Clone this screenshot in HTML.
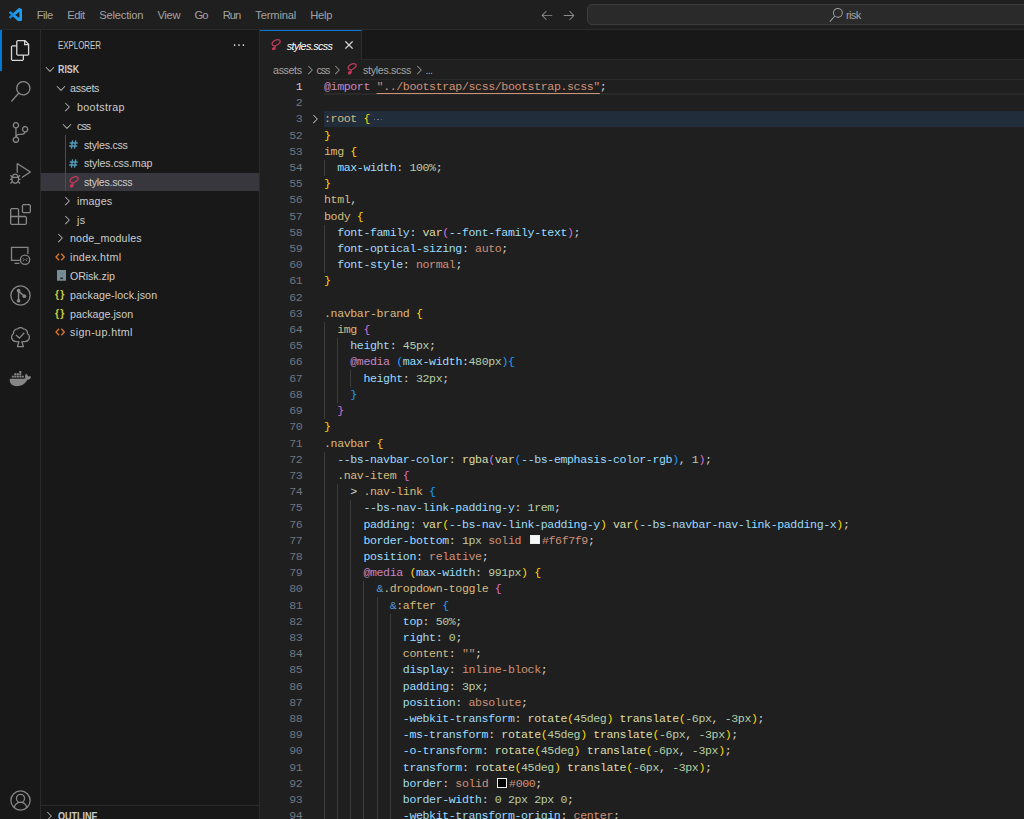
<!DOCTYPE html>
<html><head><meta charset="utf-8">
<style>
*{box-sizing:border-box;margin:0;padding:0}
html,body{width:1024px;height:819px;overflow:hidden;background:#181818}
body{position:relative;font-family:"Liberation Sans",sans-serif;color:#ccc;font-size:11px}
.abs{position:absolute}
#title{position:absolute;left:0;top:0;width:1024px;height:30px;background:#1f1f1f;border-bottom:1px solid #2b2b2b}
.menu{position:absolute;top:8px;font-size:11.2px;line-height:14px;color:#a2a2a2;white-space:nowrap}
#search{position:absolute;left:587px;top:4px;width:460px;height:20.600px;background:#2a2a2a;border:1px solid #3d3d3d;border-radius:5px}
#act{position:absolute;left:0;top:30px;width:41px;height:789px;background:#181818;border-right:1px solid #2b2b2b}
#side{position:absolute;left:41px;top:30px;width:218px;height:789px;background:#181818}
#sideb{z-index:5;position:absolute;left:258.6px;top:30px;width:1px;height:789px;background:#2b2b2b}
#tabs{position:absolute;left:260px;top:30px;width:764px;height:30px;background:#181818;border-bottom:1px solid #2b2b2b}
#tab{position:absolute;left:259.4px;top:30px;width:102.2px;height:30px;background:#1f1f1f;border-top:1px solid #0078d4;border-right:1px solid #2b2b2b}
#ed{position:absolute;left:260px;top:60px;width:764px;height:759px;background:#1f1f1f}
.row{margin-top:.5px;position:absolute;left:41px;width:218px;height:18.77px;font-size:11.1px;line-height:18.77px;color:#ccc;white-space:nowrap}
.row span{position:absolute;top:0}
.ic{position:absolute;fill:#c5c5c5}
.ai{position:absolute;fill:#868686}
.ln{position:absolute;left:262px;width:40.39px;text-align:right;font-family:"Liberation Mono",monospace;font-size:11.6px;letter-spacing:-0.39px;line-height:16.21px;height:16.21px;padding-top:0.2px;color:#6e7681;white-space:pre}
.ln.act{color:#ccc}
.cl{position:absolute;left:324px;font-family:"Liberation Mono",monospace;font-size:11.6px;letter-spacing:-0.39px;line-height:16.21px;height:16.21px;padding-top:0.2px;color:#d4d4d4;white-space:pre;overflow:visible}
.cl.fl{width:700px;background:#212d3a}
.ig{position:absolute;width:1px;height:16.21px;background:#3c3c3c}
.su{text-decoration:underline;text-decoration-color:#ce9178;text-underline-offset:2.6px;text-decoration-thickness:1px}
.fold{display:inline-block;position:relative;width:12px;height:8px}
.fold i{position:absolute;top:4.6px;width:1.6px;height:1.6px;border-radius:1px;background:#7d838b}
.cb{display:inline-block;width:14.3px;height:1px;position:relative;vertical-align:top;letter-spacing:0}
.cb b{position:absolute;left:2.3px;top:2.1px;width:9.7px;height:9.6px;border:1.2px solid #eee;display:block}
.bc{position:absolute;top:62.6px;font-size:10.7px;line-height:14px;color:#a3a3a3;white-space:nowrap}
</style></head><body>

<!-- TITLE BAR -->
<div id="title">
<svg class="abs" style="left:8.5px;top:7.5px" width="13.8" height="13.8" viewBox="0 0 100 100">
<path fill="#1f9cf0" d="M96.46 10.8 75.86.88a6.23 6.23 0 0 0-7.11 1.2L29.3 38.05 12.12 25.01a4.16 4.16 0 0 0-5.32.24l-5.51 5.01a4.17 4.17 0 0 0 0 6.17L16.19 50 1.28 63.58a4.17 4.17 0 0 0 0 6.16l5.52 5.02a4.16 4.16 0 0 0 5.32.23L29.3 61.95l39.45 35.97a6.22 6.22 0 0 0 7.1 1.2l20.62-9.91a6.25 6.25 0 0 0 3.54-5.64V16.43a6.25 6.25 0 0 0-3.55-5.63ZM75.02 72.7 45.09 50l29.93-22.7v45.4Z"/>
<path fill="#0b7fd6" d="M29.3 38.05 12.12 25.01a4.16 4.16 0 0 0-5.32.24l-5.51 5.01a4.17 4.17 0 0 0 0 6.17L16.19 50 1.28 63.58a4.17 4.17 0 0 0 0 6.16l5.52 5.02a4.16 4.16 0 0 0 5.32.23L29.3 61.95 45.09 50Z" opacity=".55"/>
</svg>
<div class="menu" style="left:36.7px;font-size:11.2px;letter-spacing:-0.477px">File</div>
<div class="menu" style="left:67.2px;font-size:11.2px;letter-spacing:-0.427px">Edit</div>
<div class="menu" style="left:99.3px;font-size:11.2px;letter-spacing:-0.216px">Selection</div>
<div class="menu" style="left:157.4px;font-size:11.2px;letter-spacing:-0.282px">View</div>
<div class="menu" style="left:194.5px;font-size:11.2px;letter-spacing:-0.938px">Go</div>
<div class="menu" style="left:222.8px;font-size:11.2px;letter-spacing:-1.066px">Run</div>
<div class="menu" style="left:255.3px;font-size:11.2px;letter-spacing:-0.183px">Terminal</div>
<div class="menu" style="left:310.2px;font-size:11.2px;letter-spacing:-0.239px">Help</div>
<svg class="abs" style="left:540px;top:8px;fill:#919191" width="14" height="14" viewBox="0 0 16 16"><path d="M7 3.093l-5 5V8.8l5 5 .707-.707-4.146-4.147H14v-1H3.56L7.707 3.8 7 3.093z"/></svg>
<svg class="abs" style="left:562.3px;top:8px;fill:#8a8a8a" width="14" height="14" viewBox="0 0 16 16"><path d="M9 13.887l5-5V8.18l-5-5-.707.707 4.146 4.147H2v1h10.44L8.293 13.18l.707.707z"/></svg>
<div id="search"></div>
<svg class="abs" style="left:829px;top:7.6px;fill:#a8a8a8" width="14" height="14" viewBox="0 0 16 16"><path d="M15.25 0a8.25 8.25 0 0 0-6.18 13.72L1 22.88l1.12 1 8.05-9.12A8.251 8.251 0 1 0 15.25.01V0zm0 15a6.75 6.75 0 1 1 0-13.5 6.75 6.75 0 0 1 0 13.5z" transform="scale(.6667)"/></svg>
<div class="menu" style="left:846px;font-size:11.2px;letter-spacing:-0.669px">risk</div>
</div>

<!-- ACTIVITY BAR -->
<div id="act"></div>
<div class="abs" style="left:0;top:30px;width:2px;height:41px;background:#0078d4"></div>
<svg class="ai" style="left:10px;top:40px;fill:#d7d7d7" width="21" height="21" viewBox="0 0 24 24"><path d="M17.5 0h-9L7 1.5V6H2.5L1 7.5v15.07L2.5 24h12.07L16 22.57V18h4.7l1.3-1.43V4.5L17.5 0zm0 2.12l2.38 2.38H17.5V2.12zm-3 20.38h-12v-15H7v9.07L8.5 18h6v4.5zm6-6h-12v-15H16V6h4.5v10.5z"/></svg>
<svg class="ai" style="left:10px;top:81px" width="21" height="21" viewBox="0 0 24 24"><path d="M15.25 0a8.25 8.25 0 0 0-6.18 13.72L1 22.88l1.12 1 8.05-9.12A8.251 8.251 0 1 0 15.25.01V0zm0 15a6.75 6.75 0 1 1 0-13.5 6.75 6.75 0 0 1 0 13.5z"/></svg>
<svg class="ai" style="left:10px;top:122px" width="21" height="21" viewBox="0 0 24 24"><path d="M21.007 8.222A3.738 3.738 0 0 0 15.045 5.2a3.737 3.737 0 0 0 1.156 6.583 2.988 2.988 0 0 1-2.668 1.67h-2.99a4.456 4.456 0 0 0-2.989 1.165V7.4a3.737 3.737 0 1 0-1.494 0v9.117a3.776 3.776 0 1 0 1.816.099 2.99 2.99 0 0 1 2.668-1.667h2.99a4.484 4.484 0 0 0 4.223-3.039 3.736 3.736 0 0 0 3.25-3.687zM4.565 3.738a2.242 2.242 0 1 1 4.484 0 2.242 2.242 0 0 1-4.484 0zm4.484 16.441a2.242 2.242 0 1 1-4.484 0 2.242 2.242 0 0 1 4.484 0zm8.221-9.715a2.242 2.242 0 1 1 0-4.485 2.242 2.242 0 0 1 0 4.485z"/></svg>
<svg class="ai" style="left:10px;top:163px" width="21" height="21" viewBox="0 0 24 24"><path d="M10.94 13.5l-1.32 1.32a3.73 3.73 0 0 0-7.24 0L1.06 13.5 0 14.56l1.72 1.72-.22.22V18H0v1.5h1.5v.08c.077.489.214.966.41 1.42L0 22.94 1.06 24l1.65-1.65A4.308 4.308 0 0 0 6 24a4.31 4.31 0 0 0 3.29-1.65L10.94 24 12 22.94 10.09 21c.198-.464.336-.951.41-1.45v-.1H12V18h-1.5v-1.5l-.22-.22L12 14.56l-1.06-1.06zM6 13.5a2.25 2.25 0 0 1 2.25 2.25h-4.5A2.25 2.25 0 0 1 6 13.5zm3 6a3.33 3.33 0 0 1-3 3 3.33 3.33 0 0 1-3-3v-2.25h6v2.25zm14.76-9.9v1.26L13.5 17.37V15.6l8.5-5.37L9 2v9.46a5.07 5.07 0 0 0-1.5-.72V.63L8.64 0l15.12 9.6z"/></svg>
<svg class="ai" style="left:10px;top:204px" width="21" height="21" viewBox="0 0 24 24"><path d="M13.5 1.5L15 0h7.5L24 1.5V9l-1.5 1.5H15L13.5 9V1.5zm1.5 0V9h7.5V1.5H15zM0 15V6l1.5-1.5H9L10.5 6v7.5H18l1.5 1.5v7.5L18 24H1.5L0 22.5V15zm9-1.5V6H1.5v7.5H9zM9 15H1.5v7.5H9V15zm1.5 7.5H18V15h-7.5v7.5z"/></svg>
<!-- remote explorer -->
<svg class="ai" style="left:10px;top:245px;fill:none;stroke:#868686;stroke-width:1.5" width="21" height="21" viewBox="0 0 24 24"><path d="M11.200 17.500H1.750V2.800h18.700v7.400"/><path d="M5.200 21h5.600"/><circle cx="17.200" cy="16.800" r="5.300"/><path d="M14.700 15.100l1.600 1.700-1.600 1.700M19.700 15.100l-1.600 1.700 1.600 1.700" stroke-width="1.100"/></svg>
<!-- git graph -->
<svg class="ai" style="left:10px;top:285.4px;fill:none;stroke:#868686;stroke-width:1.5" width="21" height="21" viewBox="0 0 24 24"><circle cx="12" cy="12" r="11"/><circle cx="9.800" cy="6.300" r="2.100" fill="#868686" stroke="none"/><circle cx="9.800" cy="18" r="2.100" fill="#868686" stroke="none"/><circle cx="16.400" cy="12.800" r="2.100" fill="#868686" stroke="none"/><path d="M9.800 6.300v11.700M9.800 7 16.400 12.800" stroke-width="1.700"/></svg>
<!-- testing tree -->
<svg class="ai" style="left:10px;top:327px;fill:none;stroke:#868686;stroke-width:1.300;stroke-linejoin:round" width="21" height="21" viewBox="0 0 21 21"><path d="M8.900 14.700H6.200a4.500 4.500 0 0 1-2.600-8.200 4 4 0 0 1 4.100-4.600 3.600 3.600 0 0 1 5.600 0 4 4 0 0 1 4.100 4.600 4.500 4.500 0 0 1-2.600 8.200h-2.900l1.500 5H7.400z"/><path d="m5.900 8.100 3.500 3 4.900-5.400"/></svg>
<!-- docker -->
<svg class="ai" style="left:9.300px;top:368.2px" width="22.300" height="19.600" viewBox="0 0 24 22" preserveAspectRatio="none"><path d="M23.5 9.800c-.6-.4-1.900-.5-2.900-.3-.1-1-.7-1.900-1.700-2.700l-.6-.4-.4.600c-.5.800-.7 2.100-.6 3 .1.500.2 1.100.600 1.600-.800.4-2 .500-2.300.500H.9c-.3 1.900 0 4.300 1.400 6 1.300 1.500 3.200 2.300 5.800 2.300 5.500 0 9.600-2.600 11.500-7.200 1 0 2.700 0 3.600-1.700l.3-.600z"/><path d="M3 8.600h2.200v2.200H3zM5.700 8.600h2.200v2.200H5.700zM8.400 8.600h2.200v2.200H8.400zM11.100 8.600h2.200v2.200h-2.200zM13.800 8.600H16v2.200h-2.200zM5.700 6h2.200v2.200H5.700zM8.400 6h2.200v2.200H8.400zM11.100 6h2.200v2.200h-2.200zM11.100 3.400h2.200v2.200h-2.200z"/></svg>
<!-- account -->
<svg class="ai" style="left:10px;top:790px;fill:none;stroke:#868686;stroke-width:1.5" width="21" height="21" viewBox="0 0 24 24"><circle cx="12" cy="12" r="11"/><circle cx="12" cy="9.600" r="4.600"/><path d="M4.800 20c.8-3.500 3.700-5.800 7.200-5.800s6.400 2.300 7.200 5.800"/></svg>

<!-- SIDEBAR -->
<div id="side"></div><div id="sideb"></div>
<div class="abs" style="left:58px;top:39.9px;font-size:10px;line-height:12px;color:#ccc;transform-origin:0 0;transform:scaleX(.79);white-space:nowrap">EXPLORER</div>
<svg class="ic" style="left:231.7px;top:38px;fill:#dcdcdc" width="14" height="14" viewBox="0 0 16 16"><path d="M4 8a1 1 0 1 1-2 0 1 1 0 0 1 2 0zm5 0a1 1 0 1 1-2 0 1 1 0 0 1 2 0zm5 0a1 1 0 1 1-2 0 1 1 0 0 1 2 0z"/></svg>
<svg class="ic" style="left:43px;top:62.40px" width="14" height="14" viewBox="0 0 16 16"><path d="M7.976 10.072l4.357-4.357.62.618L8.284 11h-.618L3 6.333l.619-.618 4.357 4.357z"/></svg>
<div class="row" style="left:58px;top:60.00px;font-weight:bold;margin-top:0;width:auto;font-size:10.6px;transform-origin:0 0;transform:scaleX(0.834)">RISK</div>
<svg class="ic" style="left:54px;top:81.17px" width="14" height="14" viewBox="0 0 16 16"><path d="M7.976 10.072l4.357-4.357.62.618L8.284 11h-.618L3 6.333l.619-.618 4.357 4.357z"/></svg>
<div class="row" style="left:70px;top:78.77px;width:auto;font-size:10.7px;letter-spacing:-0.298px">assets</div>
<svg class="ic" style="left:60px;top:99.94px" width="14" height="14" viewBox="0 0 16 16"><path d="M10.072 8.024L5.715 3.667l.618-.62L11 7.716v.618L6.333 13l-.618-.619 4.357-4.357z"/></svg>
<div class="row" style="left:77px;top:97.54px;width:auto;font-size:10.7px;letter-spacing:0.367px">bootstrap</div>
<svg class="ic" style="left:60px;top:118.71px" width="14" height="14" viewBox="0 0 16 16"><path d="M7.976 10.072l4.357-4.357.62.618L8.284 11h-.618L3 6.333l.619-.618 4.357 4.357z"/></svg>
<div class="row" style="left:77px;top:116.31px;width:auto;font-size:10.7px;letter-spacing:-0.916px">css</div>
<svg class="abs" style="left:68.8px;top:139.98px" width="9" height="9" viewBox="0 0 9 9" fill="none" stroke="#519aba" stroke-width="1.350"><path d="M3.600.400 2.400 8.600M6.700.400 5.500 8.600M.7 3h8M.2 6h8"/></svg>
<div class="row" style="left:84px;top:135.08px;width:auto;font-size:10.7px;letter-spacing:-0.270px">styles.css</div>
<svg class="abs" style="left:68.8px;top:158.75px" width="9" height="9" viewBox="0 0 9 9" fill="none" stroke="#519aba" stroke-width="1.350"><path d="M3.600.400 2.400 8.600M6.700.400 5.500 8.600M.7 3h8M.2 6h8"/></svg>
<div class="row" style="left:84px;top:153.85px;width:auto;font-size:10.7px;letter-spacing:-0.130px">styles.css.map</div>
<div class="abs" style="left:41px;top:172.62px;width:218px;height:18.77px;background:#37373d"></div>
<svg class="abs" style="left:68.8px;top:176.02px" width="10" height="11.600" viewBox="0 0 10 11.600" fill="none" stroke="#c5385c" stroke-width="1.250" stroke-linecap="round" stroke-linejoin="round"><path d="M4.200 6.800C1.700 7.100.2 5.200 1.700 3.100 3.300.9 7.400-.1 8.800 1.400 10 2.800 8 5.400 5 6.500 4 7 4.400 8.100 3.700 9.400"/><ellipse cx="2.700" cy="9.900" rx="1.200" ry="1" fill="#c5385c" transform="rotate(-35 2.700 9.900)"/></svg>
<div class="row" style="left:84px;top:172.62px;width:auto;font-size:10.7px;letter-spacing:-0.297px">styles.scss</div>
<svg class="ic" style="left:60px;top:193.79px" width="14" height="14" viewBox="0 0 16 16"><path d="M10.072 8.024L5.715 3.667l.618-.62L11 7.716v.618L6.333 13l-.618-.619 4.357-4.357z"/></svg>
<div class="row" style="left:77px;top:191.39px;width:auto;font-size:10.7px;letter-spacing:0.129px">images</div>
<svg class="ic" style="left:60px;top:212.56px" width="14" height="14" viewBox="0 0 16 16"><path d="M10.072 8.024L5.715 3.667l.618-.62L11 7.716v.618L6.333 13l-.618-.619 4.357-4.357z"/></svg>
<div class="row" style="left:77px;top:210.16px;width:auto;font-size:10.7px;letter-spacing:0.281px">js</div>
<svg class="ic" style="left:53px;top:231.33px" width="14" height="14" viewBox="0 0 16 16"><path d="M10.072 8.024L5.715 3.667l.618-.62L11 7.716v.618L6.333 13l-.618-.619 4.357-4.357z"/></svg>
<div class="row" style="left:70px;top:228.93px;width:auto;font-size:10.7px;letter-spacing:0.134px">node_modules</div>
<svg class="abs" style="left:54.9px;top:252.80px" width="10.400" height="8" viewBox="0 0 10.400 8" fill="none" stroke="#dd7531" stroke-width="1.350"><path d="M4.100.700 1 4l3.100 3.300M6.300.700 9.400 4 6.300 7.300"/></svg>
<div class="row" style="left:70px;top:247.70px;width:auto;font-size:10.7px;letter-spacing:0.265px">index.html</div>
<svg class="abs" style="left:56.7px;top:270.27px" width="9.400" height="10.800" viewBox="0 0 9.400 10.800"><rect x="0" y="0" width="9.400" height="10.800" rx=".6" fill="#788c98"/><path d="M3.300 2.800h1v1h-1zM5.100 2.800h1v1h-1zM4.200 4.600h1v1h-1z" fill="#5d7383"/><path d="M3.300 7.500h2.800v1.600H3.300z" fill="#2a2f33"/></svg>
<div class="row" style="left:70px;top:266.47px;width:auto;font-size:10.7px;letter-spacing:-0.104px">ORisk.zip</div>
<div class="abs" style="left:55px;top:284.74px;font-size:10.5px;line-height:18.77px;font-weight:bold;color:#cbcb41;letter-spacing:-0.5px;white-space:nowrap">{&thinsp;}</div>
<div class="row" style="left:70px;top:285.24px;width:auto;font-size:10.7px;letter-spacing:0.096px">package-lock.json</div>
<div class="abs" style="left:55px;top:303.51px;font-size:10.5px;line-height:18.77px;font-weight:bold;color:#cbcb41;letter-spacing:-0.5px;white-space:nowrap">{&thinsp;}</div>
<div class="row" style="left:70px;top:304.01px;width:auto;font-size:10.7px;letter-spacing:0.011px">package.json</div>
<svg class="abs" style="left:54.9px;top:327.88px" width="10.400" height="8" viewBox="0 0 10.400 8" fill="none" stroke="#dd7531" stroke-width="1.350"><path d="M4.100.700 1 4l3.100 3.300M6.300.700 9.400 4 6.300 7.300"/></svg>
<div class="row" style="left:70px;top:322.78px;width:auto;font-size:10.7px;letter-spacing:0.389px">sign-up.html</div>
<div class="abs" style="left:65px;top:135px;width:1px;height:56px;background:#4d4d4d"></div>

<div class="abs" style="left:41px;top:805px;width:218px;height:1px;background:#2b2b2b"></div>
<svg class="ic" style="left:42.2px;top:809px" width="14" height="14" viewBox="0 0 16 16"><path d="M10.072 8.024L5.715 3.667l.618-.62L11 7.716v.618L6.333 13l-.618-.619 4.357-4.357z"/></svg>
<div class="abs" style="left:58px;top:810px;font-size:10.6px;line-height:12px;font-weight:bold;color:#ccc;transform-origin:0 0;transform:scaleX(0.852);white-space:nowrap">OUTLINE</div>

<!-- TABS -->
<div id="tabs"></div>
<div id="tab"></div>
<svg class="abs" style="left:271.1px;top:38.6px" width="10" height="11.600" viewBox="0 0 10 11.600" fill="none" stroke="#c5385c" stroke-width="1.250" stroke-linecap="round" stroke-linejoin="round"><path d="M4.200 6.800C1.700 7.100.2 5.200 1.700 3.100 3.300.9 7.400-.1 8.800 1.400 10 2.800 8 5.400 5 6.500 4 7 4.400 8.100 3.700 9.400"/><ellipse cx="2.700" cy="9.900" rx="1.200" ry="1" fill="#c5385c" transform="rotate(-35 2.700 9.900)"/></svg>
<div class="abs" id="tabt" style="left:286.8px;top:38.6px;font-size:10.7px;font-style:italic;letter-spacing:-0.557px;line-height:14px;color:#fff;white-space:nowrap">styles.scss</div>
<svg class="abs" style="left:342.2px;top:38.4px;fill:#f0f0f0;stroke:#f0f0f0;stroke-width:.45" width="14" height="14" viewBox="0 0 16 16"><path d="M8 8.707l3.646 3.647.708-.707L8.707 8l3.647-3.646-.707-.708L8 7.293 4.354 3.646l-.707.708L7.293 8l-3.646 3.646.707.708L8 8.707z"/></svg>

<!-- EDITOR -->
<div id="ed"></div>
<div class="bc" id="bc1" style="left:273.1px;font-size:10.7px;letter-spacing:-0.398px">assets</div>
<svg class="abs" style="left:302.6px;top:62.5px;fill:#a0a0a0" width="14" height="14" viewBox="0 0 16 16"><path d="M10.072 8.024L5.715 3.667l.618-.62L11 7.716v.618L6.333 13l-.618-.619 4.357-4.357z"/></svg>
<div class="bc" id="bc2" style="left:316.6px;font-size:10.7px;letter-spacing:-1.166px">css</div>
<svg class="abs" style="left:330.2px;top:62.5px;fill:#a0a0a0" width="14" height="14" viewBox="0 0 16 16"><path d="M10.072 8.024L5.715 3.667l.618-.62L11 7.716v.618L6.333 13l-.618-.619 4.357-4.357z"/></svg>
<svg class="abs" style="left:347.2px;top:63.3px" width="10" height="11.600" viewBox="0 0 10 11.600" fill="none" stroke="#c5385c" stroke-width="1.250" stroke-linecap="round" stroke-linejoin="round"><path d="M4.200 6.800C1.700 7.100.2 5.200 1.700 3.100 3.300.9 7.400-.1 8.800 1.400 10 2.800 8 5.400 5 6.500 4 7 4.400 8.100 3.700 9.400"/><ellipse cx="2.700" cy="9.900" rx="1.200" ry="1" fill="#c5385c" transform="rotate(-35 2.700 9.900)"/></svg>
<div class="bc" id="bc3" style="left:363.1px;font-size:10.7px;letter-spacing:-0.337px">styles.scss</div>
<svg class="abs" style="left:411.6px;top:62.5px;fill:#a0a0a0" width="14" height="14" viewBox="0 0 16 16"><path d="M10.072 8.024L5.715 3.667l.618-.62L11 7.716v.618L6.333 13l-.618-.619 4.357-4.357z"/></svg>
<div class="bc" id="bc4" style="left:425.6px;font-size:10.7px;letter-spacing:-0.761px">...</div>
<!-- current line borders -->
<div class="abs" style="left:324px;top:79px;width:700px;height:1.3px;background:#292929"></div>
<div class="abs" style="left:324px;top:93.4px;width:700px;height:1.3px;background:#292929"></div>
<svg class="ic" style="left:308px;top:112px" width="14" height="14" viewBox="0 0 16 16"><path d="M10.072 8.024L5.715 3.667l.618-.62L11 7.716v.618L6.333 13l-.618-.619 4.357-4.357z"/></svg>
<div class="ln act" style="top:78.70px">1</div>
<div class="cl" style="top:78.70px"><span style="color:#C586C0">@import</span> <span class="su" style="color:#CE9178">&quot;../bootstrap/scss/bootstrap.scss&quot;</span><span style="color:#D4D4D4">;</span></div>
<div class="ln" style="top:94.91px">2</div>
<div class="ln" style="top:111.12px">3</div>
<div class="cl fl" style="top:111.12px"><span style="color:#D7BA7D">:root</span> <span style="color:#FFD700">{</span><span class="fold"><i style="left:3.6px"></i><i style="left:7.1px"></i><i style="left:10.6px"></i></span></div>
<div class="ln" style="top:127.33px">52</div>
<div class="cl" style="top:127.33px"><span style="color:#FFD700">}</span></div>
<div class="ln" style="top:143.54px">53</div>
<div class="cl" style="top:143.54px"><span style="color:#D7BA7D">img</span> <span style="color:#FFD700">{</span></div>
<div class="ln" style="top:159.75px">54</div>
<i class="ig" style="left:324.00px;top:159.75px"></i>
<div class="cl" style="top:159.75px">  <span style="color:#9CDCFE">max-width</span><span style="color:#D4D4D4">: </span><span style="color:#B5CEA8">100%</span><span style="color:#D4D4D4">;</span></div>
<div class="ln" style="top:175.96px">55</div>
<div class="cl" style="top:175.96px"><span style="color:#FFD700">}</span></div>
<div class="ln" style="top:192.17px">56</div>
<div class="cl" style="top:192.17px"><span style="color:#D7BA7D">html</span><span style="color:#D4D4D4">,</span></div>
<div class="ln" style="top:208.38px">57</div>
<div class="cl" style="top:208.38px"><span style="color:#D7BA7D">body</span> <span style="color:#FFD700">{</span></div>
<div class="ln" style="top:224.59px">58</div>
<i class="ig" style="left:324.00px;top:224.59px"></i>
<div class="cl" style="top:224.59px">  <span style="color:#9CDCFE">font-family</span><span style="color:#D4D4D4">: </span><span style="color:#DCDCAA">var</span><span style="color:#DA70D6">(</span><span style="color:#9CDCFE">--font-family-text</span><span style="color:#DA70D6">)</span><span style="color:#D4D4D4">;</span></div>
<div class="ln" style="top:240.80px">59</div>
<i class="ig" style="left:324.00px;top:240.80px"></i>
<div class="cl" style="top:240.80px">  <span style="color:#9CDCFE">font-optical-sizing</span><span style="color:#D4D4D4">: </span><span style="color:#CE9178">auto</span><span style="color:#D4D4D4">;</span></div>
<div class="ln" style="top:257.01px">60</div>
<i class="ig" style="left:324.00px;top:257.01px"></i>
<div class="cl" style="top:257.01px">  <span style="color:#9CDCFE">font-style</span><span style="color:#D4D4D4">: </span><span style="color:#CE9178">normal</span><span style="color:#D4D4D4">;</span></div>
<div class="ln" style="top:273.22px">61</div>
<div class="cl" style="top:273.22px"><span style="color:#FFD700">}</span></div>
<div class="ln" style="top:289.43px">62</div>
<div class="ln" style="top:305.64px">63</div>
<div class="cl" style="top:305.64px"><span style="color:#D7BA7D">.navbar-brand</span> <span style="color:#FFD700">{</span></div>
<div class="ln" style="top:321.85px">64</div>
<i class="ig" style="left:324.00px;top:321.85px"></i>
<div class="cl" style="top:321.85px">  <span style="color:#D7BA7D">img</span> <span style="color:#DA70D6">{</span></div>
<div class="ln" style="top:338.06px">65</div>
<i class="ig" style="left:324.00px;top:338.06px"></i>
<i class="ig" style="left:337.14px;top:338.06px"></i>
<div class="cl" style="top:338.06px">    <span style="color:#9CDCFE">height</span><span style="color:#D4D4D4">: </span><span style="color:#B5CEA8">45px</span><span style="color:#D4D4D4">;</span></div>
<div class="ln" style="top:354.27px">66</div>
<i class="ig" style="left:324.00px;top:354.27px"></i>
<i class="ig" style="left:337.14px;top:354.27px"></i>
<div class="cl" style="top:354.27px">    <span style="color:#C586C0">@media</span> <span style="color:#179FFF">(</span><span style="color:#9CDCFE">max-width</span><span style="color:#D4D4D4">:</span><span style="color:#B5CEA8">480px</span><span style="color:#179FFF">)</span><span style="color:#179FFF">{</span></div>
<div class="ln" style="top:370.48px">67</div>
<i class="ig" style="left:324.00px;top:370.48px"></i>
<i class="ig" style="left:337.14px;top:370.48px"></i>
<i class="ig" style="left:350.28px;top:370.48px"></i>
<div class="cl" style="top:370.48px">      <span style="color:#9CDCFE">height</span><span style="color:#D4D4D4">: </span><span style="color:#B5CEA8">32px</span><span style="color:#D4D4D4">;</span></div>
<div class="ln" style="top:386.69px">68</div>
<i class="ig" style="left:324.00px;top:386.69px"></i>
<i class="ig" style="left:337.14px;top:386.69px"></i>
<div class="cl" style="top:386.69px">    <span style="color:#179FFF">}</span></div>
<div class="ln" style="top:402.90px">69</div>
<i class="ig" style="left:324.00px;top:402.90px"></i>
<div class="cl" style="top:402.90px">  <span style="color:#DA70D6">}</span></div>
<div class="ln" style="top:419.11px">70</div>
<div class="cl" style="top:419.11px"><span style="color:#FFD700">}</span></div>
<div class="ln" style="top:435.32px">71</div>
<div class="cl" style="top:435.32px"><span style="color:#D7BA7D">.navbar</span> <span style="color:#FFD700">{</span></div>
<div class="ln" style="top:451.53px">72</div>
<i class="ig" style="left:324.00px;top:451.53px"></i>
<div class="cl" style="top:451.53px">  <span style="color:#9CDCFE">--bs-navbar-color</span><span style="color:#D4D4D4">: </span><span style="color:#DCDCAA">rgba</span><span style="color:#DA70D6">(</span><span style="color:#DCDCAA">var</span><span style="color:#179FFF">(</span><span style="color:#9CDCFE">--bs-emphasis-color-rgb</span><span style="color:#179FFF">)</span><span style="color:#D4D4D4">, </span><span style="color:#B5CEA8">1</span><span style="color:#DA70D6">)</span><span style="color:#D4D4D4">;</span></div>
<div class="ln" style="top:467.74px">73</div>
<i class="ig" style="left:324.00px;top:467.74px"></i>
<div class="cl" style="top:467.74px">  <span style="color:#D7BA7D">.nav-item</span> <span style="color:#DA70D6">{</span></div>
<div class="ln" style="top:483.95px">74</div>
<i class="ig" style="left:324.00px;top:483.95px"></i>
<i class="ig" style="left:337.14px;top:483.95px"></i>
<div class="cl" style="top:483.95px"><span style="color:#D4D4D4">    &gt; </span><span style="color:#D7BA7D">.nav-link</span> <span style="color:#179FFF">{</span></div>
<div class="ln" style="top:500.16px">75</div>
<i class="ig" style="left:324.00px;top:500.16px"></i>
<i class="ig" style="left:337.14px;top:500.16px"></i>
<i class="ig" style="left:350.28px;top:500.16px"></i>
<div class="cl" style="top:500.16px">      <span style="color:#9CDCFE">--bs-nav-link-padding-y</span><span style="color:#D4D4D4">: </span><span style="color:#B5CEA8">1rem</span><span style="color:#D4D4D4">;</span></div>
<div class="ln" style="top:516.37px">76</div>
<i class="ig" style="left:324.00px;top:516.37px"></i>
<i class="ig" style="left:337.14px;top:516.37px"></i>
<i class="ig" style="left:350.28px;top:516.37px"></i>
<div class="cl" style="top:516.37px">      <span style="color:#9CDCFE">padding</span><span style="color:#D4D4D4">: </span><span style="color:#DCDCAA">var</span><span style="color:#FFD700">(</span><span style="color:#9CDCFE">--bs-nav-link-padding-y</span><span style="color:#FFD700">)</span> <span style="color:#DCDCAA">var</span><span style="color:#FFD700">(</span><span style="color:#9CDCFE">--bs-navbar-nav-link-padding-x</span><span style="color:#FFD700">)</span><span style="color:#D4D4D4">;</span></div>
<div class="ln" style="top:532.58px">77</div>
<i class="ig" style="left:324.00px;top:532.58px"></i>
<i class="ig" style="left:337.14px;top:532.58px"></i>
<i class="ig" style="left:350.28px;top:532.58px"></i>
<div class="cl" style="top:532.58px">      <span style="color:#9CDCFE">border-bottom</span><span style="color:#D4D4D4">: </span><span style="color:#B5CEA8">1px</span> <span style="color:#CE9178">solid</span> <span class="cb"><b style="background:#f6f7f9"></b></span><span style="color:#CE9178">#f6f7f9</span><span style="color:#D4D4D4">;</span></div>
<div class="ln" style="top:548.79px">78</div>
<i class="ig" style="left:324.00px;top:548.79px"></i>
<i class="ig" style="left:337.14px;top:548.79px"></i>
<i class="ig" style="left:350.28px;top:548.79px"></i>
<div class="cl" style="top:548.79px">      <span style="color:#9CDCFE">position</span><span style="color:#D4D4D4">: </span><span style="color:#CE9178">relative</span><span style="color:#D4D4D4">;</span></div>
<div class="ln" style="top:565.00px">79</div>
<i class="ig" style="left:324.00px;top:565.00px"></i>
<i class="ig" style="left:337.14px;top:565.00px"></i>
<i class="ig" style="left:350.28px;top:565.00px"></i>
<div class="cl" style="top:565.00px">      <span style="color:#C586C0">@media</span> <span style="color:#FFD700">(</span><span style="color:#9CDCFE">max-width</span><span style="color:#D4D4D4">: </span><span style="color:#B5CEA8">991px</span><span style="color:#FFD700">)</span> <span style="color:#FFD700">{</span></div>
<div class="ln" style="top:581.21px">80</div>
<i class="ig" style="left:324.00px;top:581.21px"></i>
<i class="ig" style="left:337.14px;top:581.21px"></i>
<i class="ig" style="left:350.28px;top:581.21px"></i>
<i class="ig" style="left:363.42px;top:581.21px"></i>
<div class="cl" style="top:581.21px">        <span style="color:#569CD6">&amp;</span><span style="color:#D7BA7D">.dropdown-toggle</span> <span style="color:#DA70D6">{</span></div>
<div class="ln" style="top:597.42px">81</div>
<i class="ig" style="left:324.00px;top:597.42px"></i>
<i class="ig" style="left:337.14px;top:597.42px"></i>
<i class="ig" style="left:350.28px;top:597.42px"></i>
<i class="ig" style="left:363.42px;top:597.42px"></i>
<i class="ig" style="left:376.56px;top:597.42px"></i>
<div class="cl" style="top:597.42px">          <span style="color:#569CD6">&amp;</span><span style="color:#D7BA7D">:after</span> <span style="color:#179FFF">{</span></div>
<div class="ln" style="top:613.63px">82</div>
<i class="ig" style="left:324.00px;top:613.63px"></i>
<i class="ig" style="left:337.14px;top:613.63px"></i>
<i class="ig" style="left:350.28px;top:613.63px"></i>
<i class="ig" style="left:363.42px;top:613.63px"></i>
<i class="ig" style="left:376.56px;top:613.63px"></i>
<i class="ig" style="left:389.70px;top:613.63px"></i>
<div class="cl" style="top:613.63px">            <span style="color:#9CDCFE">top</span><span style="color:#D4D4D4">: </span><span style="color:#B5CEA8">50%</span><span style="color:#D4D4D4">;</span></div>
<div class="ln" style="top:629.84px">83</div>
<i class="ig" style="left:324.00px;top:629.84px"></i>
<i class="ig" style="left:337.14px;top:629.84px"></i>
<i class="ig" style="left:350.28px;top:629.84px"></i>
<i class="ig" style="left:363.42px;top:629.84px"></i>
<i class="ig" style="left:376.56px;top:629.84px"></i>
<i class="ig" style="left:389.70px;top:629.84px"></i>
<div class="cl" style="top:629.84px">            <span style="color:#9CDCFE">right</span><span style="color:#D4D4D4">: </span><span style="color:#B5CEA8">0</span><span style="color:#D4D4D4">;</span></div>
<div class="ln" style="top:646.05px">84</div>
<i class="ig" style="left:324.00px;top:646.05px"></i>
<i class="ig" style="left:337.14px;top:646.05px"></i>
<i class="ig" style="left:350.28px;top:646.05px"></i>
<i class="ig" style="left:363.42px;top:646.05px"></i>
<i class="ig" style="left:376.56px;top:646.05px"></i>
<i class="ig" style="left:389.70px;top:646.05px"></i>
<div class="cl" style="top:646.05px">            <span style="color:#D7BA7D">content</span><span style="color:#D4D4D4">: </span><span style="color:#CE9178">&quot;&quot;</span><span style="color:#D4D4D4">;</span></div>
<div class="ln" style="top:662.26px">85</div>
<i class="ig" style="left:324.00px;top:662.26px"></i>
<i class="ig" style="left:337.14px;top:662.26px"></i>
<i class="ig" style="left:350.28px;top:662.26px"></i>
<i class="ig" style="left:363.42px;top:662.26px"></i>
<i class="ig" style="left:376.56px;top:662.26px"></i>
<i class="ig" style="left:389.70px;top:662.26px"></i>
<div class="cl" style="top:662.26px">            <span style="color:#9CDCFE">display</span><span style="color:#D4D4D4">: </span><span style="color:#CE9178">inline-block</span><span style="color:#D4D4D4">;</span></div>
<div class="ln" style="top:678.47px">86</div>
<i class="ig" style="left:324.00px;top:678.47px"></i>
<i class="ig" style="left:337.14px;top:678.47px"></i>
<i class="ig" style="left:350.28px;top:678.47px"></i>
<i class="ig" style="left:363.42px;top:678.47px"></i>
<i class="ig" style="left:376.56px;top:678.47px"></i>
<i class="ig" style="left:389.70px;top:678.47px"></i>
<div class="cl" style="top:678.47px">            <span style="color:#9CDCFE">padding</span><span style="color:#D4D4D4">: </span><span style="color:#B5CEA8">3px</span><span style="color:#D4D4D4">;</span></div>
<div class="ln" style="top:694.68px">87</div>
<i class="ig" style="left:324.00px;top:694.68px"></i>
<i class="ig" style="left:337.14px;top:694.68px"></i>
<i class="ig" style="left:350.28px;top:694.68px"></i>
<i class="ig" style="left:363.42px;top:694.68px"></i>
<i class="ig" style="left:376.56px;top:694.68px"></i>
<i class="ig" style="left:389.70px;top:694.68px"></i>
<div class="cl" style="top:694.68px">            <span style="color:#9CDCFE">position</span><span style="color:#D4D4D4">: </span><span style="color:#CE9178">absolute</span><span style="color:#D4D4D4">;</span></div>
<div class="ln" style="top:710.89px">88</div>
<i class="ig" style="left:324.00px;top:710.89px"></i>
<i class="ig" style="left:337.14px;top:710.89px"></i>
<i class="ig" style="left:350.28px;top:710.89px"></i>
<i class="ig" style="left:363.42px;top:710.89px"></i>
<i class="ig" style="left:376.56px;top:710.89px"></i>
<i class="ig" style="left:389.70px;top:710.89px"></i>
<div class="cl" style="top:710.89px">            <span style="color:#9CDCFE">-webkit-transform</span><span style="color:#D4D4D4">: </span><span style="color:#DCDCAA">rotate</span><span style="color:#FFD700">(</span><span style="color:#B5CEA8">45deg</span><span style="color:#FFD700">)</span> <span style="color:#DCDCAA">translate</span><span style="color:#FFD700">(</span><span style="color:#B5CEA8">-6px</span><span style="color:#D4D4D4">, </span><span style="color:#B5CEA8">-3px</span><span style="color:#FFD700">)</span><span style="color:#D4D4D4">;</span></div>
<div class="ln" style="top:727.10px">89</div>
<i class="ig" style="left:324.00px;top:727.10px"></i>
<i class="ig" style="left:337.14px;top:727.10px"></i>
<i class="ig" style="left:350.28px;top:727.10px"></i>
<i class="ig" style="left:363.42px;top:727.10px"></i>
<i class="ig" style="left:376.56px;top:727.10px"></i>
<i class="ig" style="left:389.70px;top:727.10px"></i>
<div class="cl" style="top:727.10px">            <span style="color:#9CDCFE">-ms-transform</span><span style="color:#D4D4D4">: </span><span style="color:#DCDCAA">rotate</span><span style="color:#FFD700">(</span><span style="color:#B5CEA8">45deg</span><span style="color:#FFD700">)</span> <span style="color:#DCDCAA">translate</span><span style="color:#FFD700">(</span><span style="color:#B5CEA8">-6px</span><span style="color:#D4D4D4">, </span><span style="color:#B5CEA8">-3px</span><span style="color:#FFD700">)</span><span style="color:#D4D4D4">;</span></div>
<div class="ln" style="top:743.31px">90</div>
<i class="ig" style="left:324.00px;top:743.31px"></i>
<i class="ig" style="left:337.14px;top:743.31px"></i>
<i class="ig" style="left:350.28px;top:743.31px"></i>
<i class="ig" style="left:363.42px;top:743.31px"></i>
<i class="ig" style="left:376.56px;top:743.31px"></i>
<i class="ig" style="left:389.70px;top:743.31px"></i>
<div class="cl" style="top:743.31px">            <span style="color:#9CDCFE">-o-transform</span><span style="color:#D4D4D4">: </span><span style="color:#DCDCAA">rotate</span><span style="color:#FFD700">(</span><span style="color:#B5CEA8">45deg</span><span style="color:#FFD700">)</span> <span style="color:#DCDCAA">translate</span><span style="color:#FFD700">(</span><span style="color:#B5CEA8">-6px</span><span style="color:#D4D4D4">, </span><span style="color:#B5CEA8">-3px</span><span style="color:#FFD700">)</span><span style="color:#D4D4D4">;</span></div>
<div class="ln" style="top:759.52px">91</div>
<i class="ig" style="left:324.00px;top:759.52px"></i>
<i class="ig" style="left:337.14px;top:759.52px"></i>
<i class="ig" style="left:350.28px;top:759.52px"></i>
<i class="ig" style="left:363.42px;top:759.52px"></i>
<i class="ig" style="left:376.56px;top:759.52px"></i>
<i class="ig" style="left:389.70px;top:759.52px"></i>
<div class="cl" style="top:759.52px">            <span style="color:#9CDCFE">transform</span><span style="color:#D4D4D4">: </span><span style="color:#DCDCAA">rotate</span><span style="color:#FFD700">(</span><span style="color:#B5CEA8">45deg</span><span style="color:#FFD700">)</span> <span style="color:#DCDCAA">translate</span><span style="color:#FFD700">(</span><span style="color:#B5CEA8">-6px</span><span style="color:#D4D4D4">, </span><span style="color:#B5CEA8">-3px</span><span style="color:#FFD700">)</span><span style="color:#D4D4D4">;</span></div>
<div class="ln" style="top:775.73px">92</div>
<i class="ig" style="left:324.00px;top:775.73px"></i>
<i class="ig" style="left:337.14px;top:775.73px"></i>
<i class="ig" style="left:350.28px;top:775.73px"></i>
<i class="ig" style="left:363.42px;top:775.73px"></i>
<i class="ig" style="left:376.56px;top:775.73px"></i>
<i class="ig" style="left:389.70px;top:775.73px"></i>
<div class="cl" style="top:775.73px">            <span style="color:#9CDCFE">border</span><span style="color:#D4D4D4">: </span><span style="color:#CE9178">solid</span> <span class="cb"><b style="background:#000"></b></span><span style="color:#CE9178">#000</span><span style="color:#D4D4D4">;</span></div>
<div class="ln" style="top:791.94px">93</div>
<i class="ig" style="left:324.00px;top:791.94px"></i>
<i class="ig" style="left:337.14px;top:791.94px"></i>
<i class="ig" style="left:350.28px;top:791.94px"></i>
<i class="ig" style="left:363.42px;top:791.94px"></i>
<i class="ig" style="left:376.56px;top:791.94px"></i>
<i class="ig" style="left:389.70px;top:791.94px"></i>
<div class="cl" style="top:791.94px">            <span style="color:#9CDCFE">border-width</span><span style="color:#D4D4D4">: </span><span style="color:#B5CEA8">0</span> <span style="color:#B5CEA8">2px</span> <span style="color:#B5CEA8">2px</span> <span style="color:#B5CEA8">0</span><span style="color:#D4D4D4">;</span></div>
<div class="ln" style="top:808.15px">94</div>
<i class="ig" style="left:324.00px;top:808.15px"></i>
<i class="ig" style="left:337.14px;top:808.15px"></i>
<i class="ig" style="left:350.28px;top:808.15px"></i>
<i class="ig" style="left:363.42px;top:808.15px"></i>
<i class="ig" style="left:376.56px;top:808.15px"></i>
<i class="ig" style="left:389.70px;top:808.15px"></i>
<div class="cl" style="top:808.15px">            <span style="color:#9CDCFE">-webkit-transform-origin</span><span style="color:#D4D4D4">: </span><span style="color:#CE9178">center</span><span style="color:#D4D4D4">;</span></div>
</body></html>
